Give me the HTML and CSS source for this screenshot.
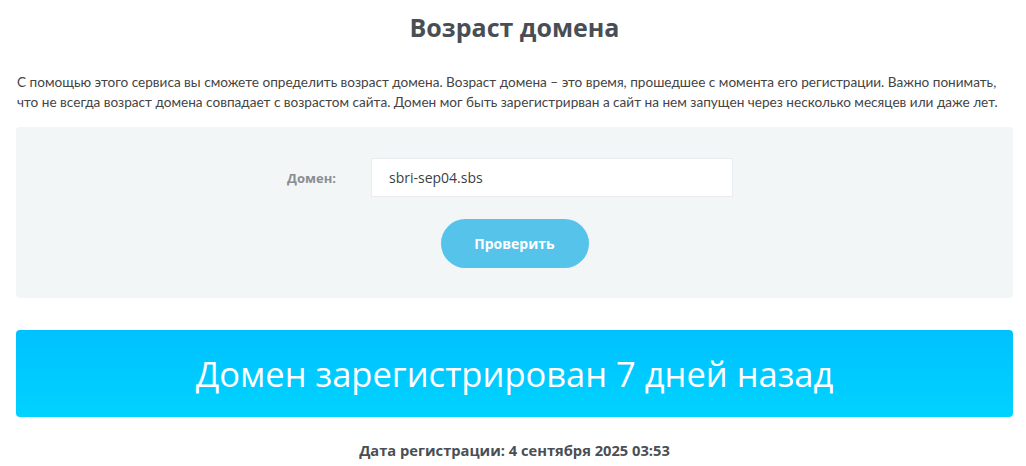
FILE: index.html
```html
<!DOCTYPE html>
<html lang="ru">
<head>
<meta charset="utf-8">
<link rel="stylesheet" href="styles.css">
</head>
<body>
<div class="page">
  <h1 class="title">Возраст домена</h1>
  <p class="intro">С помощью этого сервиса вы сможете определить возраст домена. Возраст домена – это время, прошедшее с момента его регистрации. Важно понимать, что не всегда возраст домена совпадает с возрастом сайта. Домен мог быть зарегистрирван а сайт на нем запущен через несколько месяцев или даже лет.</p>
  <form class="panel">
    <div class="row">
      <label class="label">Домен:</label>
      <div class="input">sbri-sep04.sbs</div>
    </div>
    <div class="btn-row">
      <button class="btn" type="button">Проверить</button>
    </div>
  </form>
  <div class="result">Домен зарегистрирован 7 дней назад</div>
  <div class="date">Дата регистрации: 4 сентября 2025 03:53</div>
</div>
</body>
</html>
```
FILE: styles.css
```css
* { box-sizing: border-box; }
html, body { margin: 0; padding: 0; background: #fff; }
body { font-family: "Open Sans", "Noto Sans", sans-serif; color: #4a4f55; }
.page { padding: 0 13px 0 16px; }
.title {
  margin: 0;
  padding-top: 11px;
  height: 57px;
  text-align: center;
  font-size: 25px;
  font-weight: 700;
  color: #494e56;
  line-height: 32px;
}
.intro {
  margin: 0;
  padding: 15px 0 0 1px;
  font-family: "Lato", sans-serif;
  font-size: 13.6px;
  line-height: 20px;
  color: #444;
  height: 70px;
}
.panel {
  background: #f2f6f7;
  border-radius: 4px;
  height: 171px;
  padding-top: 31px;
}
.row {
  display: flex;
  align-items: center;
  padding-left: 271px;
}
.label {
  width: 84px;
  font-weight: 700;
  font-size: 13px;
  color: #8a8d90;
}
.input {
  width: 362px;
  height: 39px;
  background: #fff;
  border: 1px solid #e8ecee;
  padding-left: 17px;
  font-size: 14px;
  line-height: 37px;
  color: #3a3f45;
}
.btn-row {
  display: flex;
  justify-content: center;
  padding-top: 22px;
}
.btn {
  width: 148px;
  height: 49px;
  border: none;
  border-radius: 25px;
  background: #55c3ea;
  color: #fff;
  font-family: "Open Sans", sans-serif;
  font-weight: 700;
  font-size: 14px;
  margin-left: 0;
}
.result {
  margin-top: 32px;
  height: 87px;
  border-radius: 4px;
  background: linear-gradient(#00c1ff, #00d3ff);
  color: #fff;
  text-align: center;
  font-size: 34.5px;
  line-height: 87px;
  font-weight: 400;
}
.date {
  text-align: center;
  padding-top: 23px;
  font-weight: 700;
  font-size: 14.7px;
  line-height: 20px;
  color: #4a4f55;
}
```
